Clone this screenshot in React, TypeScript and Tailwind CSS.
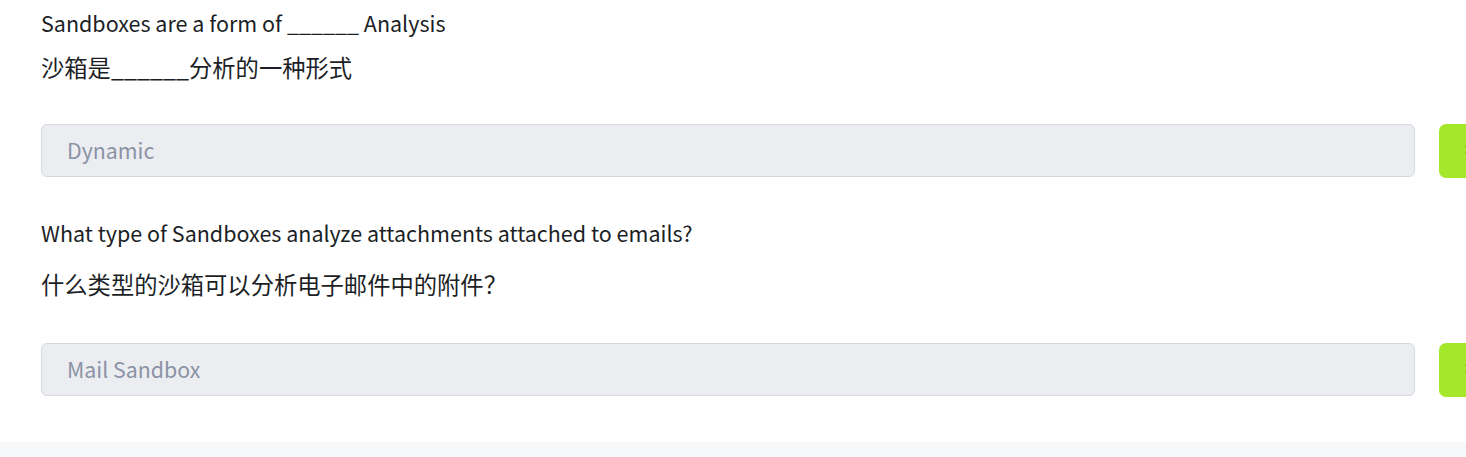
import React from 'react';

const items = [
  {
    en: 'Sandboxes are a form of ______ Analysis',
    zh: '沙箱是______分析的一种形式',
    answer: 'Dynamic',
    spacing: { top: 'pt-[9px]', zh: 'mt-[15px]', input: 'mt-[42px]' },
  },
  {
    en: 'What type of Sandboxes analyze attachments attached to emails?',
    zh: '什么类型的沙箱可以分析电子邮件中的附件？',
    answer: 'Mail Sandbox',
    spacing: { top: 'pt-[41px]', zh: 'mt-[22px]', input: 'mt-[44px]' },
  },
];

type Item = (typeof items)[number];

function Question({ en, zh, answer, spacing }: Item) {
  return (
    <div className={spacing.top}>
      <p className="text-[21.5px] leading-[28px] text-[#1c1f26]">{en}</p>
      <p className={`${spacing.zh} text-[23.3px] leading-[30px] text-[#1c1f26]`}>{zh}</p>
      <div className={`${spacing.input} flex items-start gap-[24px]`}>
        <input
          readOnly
          placeholder={answer}
          className="h-[53px] w-[1374px] shrink-0 rounded-[6px] border border-[#d6d9e1] bg-[#ecedf1] px-[25px] pb-[2px] text-[21.33px] text-[#1c1f26] outline-none placeholder:text-[#8a93a6]"
        />
        <button className="h-[54px] w-[120px] shrink-0 rounded-[7px] bg-[#a5e82b] pl-[26px] text-left text-[20px] text-[#1c1f26]">
          提交
        </button>
      </div>
    </div>
  );
}

export default function App() {
  return (
    <div className="h-[457px] w-[1466px] overflow-hidden bg-white font-['Noto_Sans_CJK_SC','Noto_Sans',sans-serif]">
      <div className="h-[442px] pl-[41px]">
        {items.map((item, i) => (
          <Question key={i} {...item} />
        ))}
      </div>
      <div className="h-[15px] bg-[#f7f8fa]" />
    </div>
  );
}
